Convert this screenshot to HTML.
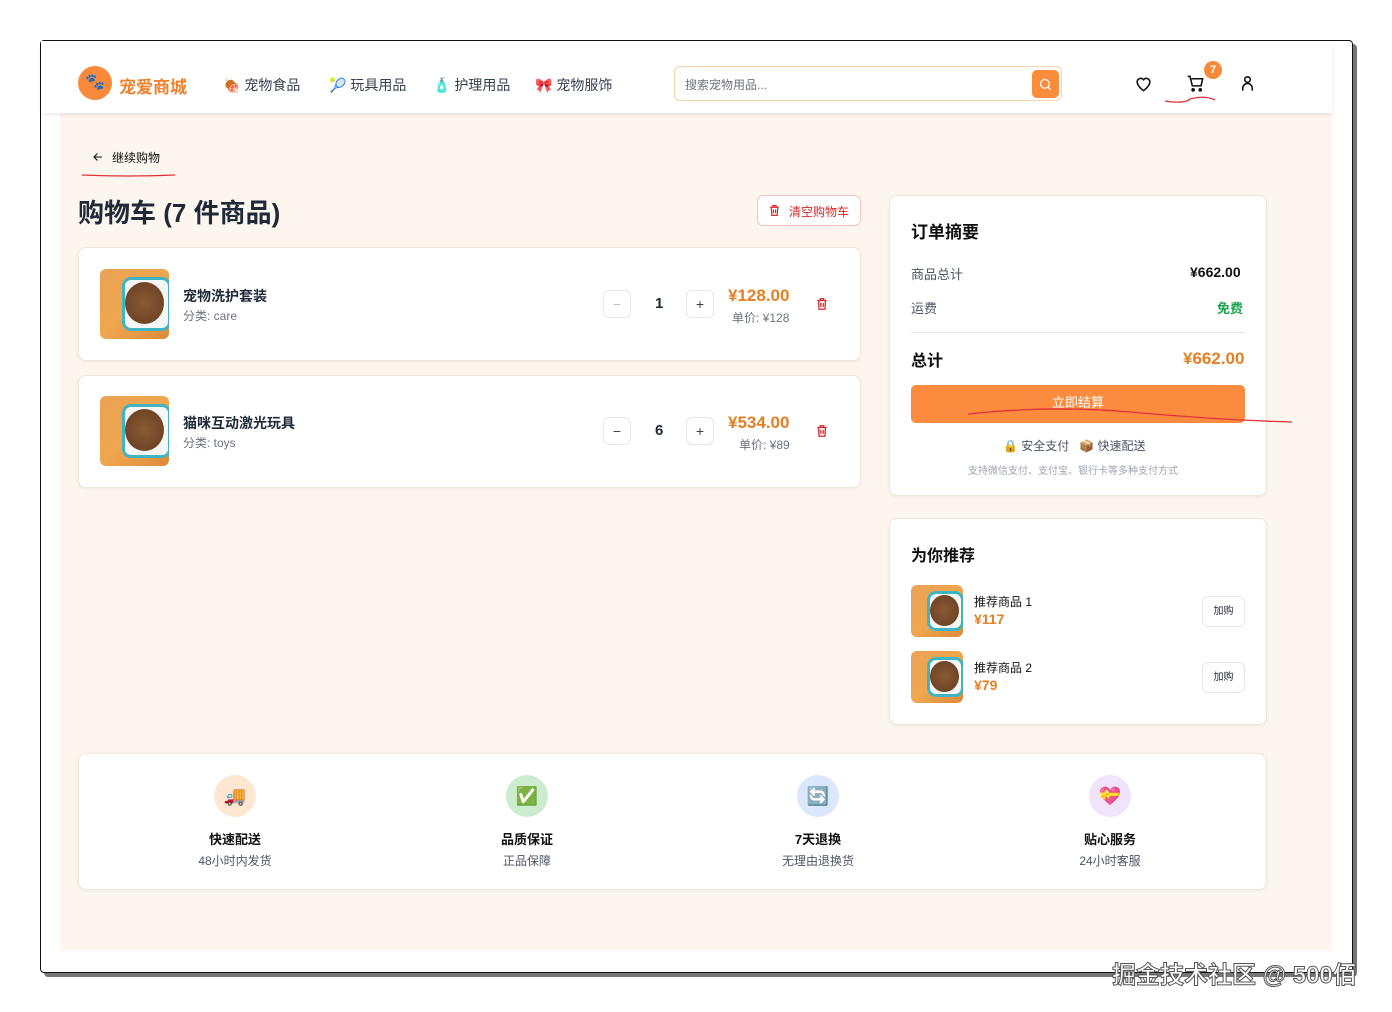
<!DOCTYPE html>
<html><head><meta charset="utf-8"><style>
*{margin:0;padding:0;box-sizing:border-box}
body{width:1392px;height:1012px;background:#fff;position:relative;overflow:hidden;font-family:"Liberation Sans","Noto Sans CJK SC",sans-serif;color:#1f2937}
.abs{position:absolute}
.frame{left:40px;top:40px;width:1313px;height:933px;border:1.5px solid #111;border-radius:4px;box-shadow:4px 4px 0 #777;background:#fff}
.content{left:60px;top:113px;width:1272px;height:838px;background:#fdf6ee}
.header{left:41px;top:41px;width:1291px;height:72px;background:#fff;box-shadow:0 2px 4px rgba(0,0,0,.08)}
.card{background:#fff;border:1px solid #f0e6da;border-radius:8px;box-shadow:0 1px 3px rgba(0,0,0,.06)}
.nav{font-size:14px;color:#374151;top:75px}
.food{border-radius:6px;overflow:hidden;background:linear-gradient(135deg,#e9a257,#f0a64e 50%,#dd8a3a);position:absolute}
.food .bowl{position:absolute;background:#f6f6f4;border:3px solid #3fb5c4;border-radius:9px}
.food .kib{position:absolute;border-radius:50%;background:radial-gradient(circle,#8a5a34,#6f4526 70%,#9a6a40)}
.qbtn{width:28px;height:28px;border:1px solid #e5e7eb;border-radius:6px;background:#fff;font-size:14px;text-align:center;line-height:26px;color:#374151}
.orange{color:#e67e22}
</style></head><body>
<div class="abs frame"></div>
<div class="abs content"></div>
<div class="abs header"></div>

<div class="abs" style="left:78px;top:66px;width:34px;height:34px;border-radius:50%;background:#f98a3c;font-size:16px;text-align:center;line-height:34px">🐾</div>
<div class="abs" style="left:119px;top:73px;font-size:17px;font-weight:bold;color:#f0812c">宠爱商城</div>
<div class="abs nav" style="left:223px">🍖 宠物食品</div>
<div class="abs nav" style="left:329px">🎾 玩具用品</div>
<div class="abs nav" style="left:433px">🧴 护理用品</div>
<div class="abs nav" style="left:535px">🎀 宠物服饰</div>

<div class="abs" style="left:674px;top:66px;width:388px;height:35px;border:1px solid #f3d2ac;border-radius:6px;background:#fff"></div>
<div class="abs" style="left:685px;top:76px;font-size:12px;color:#6b7280">搜索宠物用品...</div>
<div class="abs" style="left:1032px;top:70px;width:27px;height:28px;border-radius:5px;background:#fb8c3a"></div>
<svg class="abs" style="left:1038px;top:77px" width="15" height="15" viewBox="0 0 24 24" fill="none" stroke="#fff" stroke-width="2"><circle cx="11" cy="11" r="7"/><path d="M16 16l4 4"/></svg>

<svg class="abs" style="left:1134px;top:74px" width="19" height="19" viewBox="0 0 24 24" fill="none" stroke="#111" stroke-width="2"><path d="M12 21s-8-5.5-8-11a4.5 4.5 0 0 1 8-2.8A4.5 4.5 0 0 1 20 10c0 5.5-8 11-8 11z"/></svg>
<svg class="abs" style="left:1186px;top:74px" width="19" height="19" viewBox="0 0 24 24" fill="none" stroke="#111" stroke-width="2"><path d="M2 3h3l3 12h11l2-9H7"/><circle cx="9" cy="20" r="1.3" fill="#111"/><circle cx="18" cy="20" r="1.3" fill="#111"/></svg>
<div class="abs" style="left:1204px;top:61px;width:18px;height:18px;border-radius:50%;background:#f98a3c;color:#fff;font-size:11px;font-weight:bold;text-align:center;line-height:18px">7</div>
<svg class="abs" style="left:1238px;top:74px" width="19" height="19" viewBox="0 0 24 24" fill="none" stroke="#111" stroke-width="2"><circle cx="12" cy="7" r="3.5"/><path d="M6 21v-3a6 6 0 0 1 12 0v3"/></svg>

<svg class="abs" style="left:92px;top:151px" width="12" height="12" viewBox="0 0 24 24" fill="none" stroke="#111" stroke-width="2.2"><path d="M20 12H5M11 5l-7 7 7 7"/></svg>
<div class="abs" style="left:112px;top:149px;font-size:12px;color:#111">继续购物</div>
<div class="abs" style="left:78px;top:193px;font-size:26px;font-weight:bold;color:#1f2937">购物车 (7 件商品)</div>
<div class="abs" style="left:757px;top:195px;width:104px;height:31px;border:1px solid #f3c1c1;border-radius:6px;background:#fff"></div>
<svg class="abs" style="left:768px;top:204px" width="13" height="13" viewBox="0 0 24 24" fill="none" stroke="#dc2626" stroke-width="2.2"><path d="M4 6h16M9 6V3h6v3M6 6l1 15h10l1-15"/><path d="M10 10v7M14 10v7"/></svg>
<div class="abs" style="left:789px;top:203px;font-size:12px;color:#dc2626">清空购物车</div>

<div class="abs card" style="left:78px;top:247px;width:783px;height:114px"></div>
<div class="abs card" style="left:78px;top:375px;width:783px;height:113px"></div>

<div class="food" style="left:100px;top:269px;width:69px;height:70px"><div class="bowl" style="left:22px;top:8px;width:49px;height:54px"></div><div class="kib" style="left:25px;top:13px;width:39px;height:42px"></div></div>
<div class="abs" style="left:183px;top:286px;font-size:14px;font-weight:bold;color:#1f2937">宠物洗护套装</div>
<div class="abs" style="left:183px;top:307px;font-size:12px;color:#6b7280">分类: care</div>
<div class="abs qbtn" style="left:603px;top:290px;color:#bbb">−</div>
<div class="abs" style="left:655px;top:295px;font-size:15px;font-weight:bold">1</div>
<div class="abs qbtn" style="left:686px;top:290px">+</div>
<div class="abs orange" style="left:728px;top:286px;font-size:17px;font-weight:bold">¥128.00</div>
<div class="abs" style="left:732px;top:309px;font-size:12px;color:#6b7280">单价: ¥128</div>
<svg class="abs" style="left:815px;top:297px" width="14" height="14" viewBox="0 0 24 24" fill="none" stroke="#dc2626" stroke-width="2.2"><path d="M4 6h16M9 6V3h6v3M6 6l1 15h10l1-15"/><path d="M10 10v7M14 10v7"/></svg>

<div class="food" style="left:100px;top:396px;width:69px;height:70px"><div class="bowl" style="left:22px;top:8px;width:49px;height:54px"></div><div class="kib" style="left:25px;top:13px;width:39px;height:42px"></div></div>
<div class="abs" style="left:183px;top:413px;font-size:14px;font-weight:bold;color:#1f2937">猫咪互动激光玩具</div>
<div class="abs" style="left:183px;top:434px;font-size:12px;color:#6b7280">分类: toys</div>
<div class="abs qbtn" style="left:603px;top:417px">−</div>
<div class="abs" style="left:655px;top:422px;font-size:15px;font-weight:bold">6</div>
<div class="abs qbtn" style="left:686px;top:417px">+</div>
<div class="abs orange" style="left:728px;top:413px;font-size:17px;font-weight:bold">¥534.00</div>
<div class="abs" style="left:739px;top:436px;font-size:12px;color:#6b7280">单价: ¥89</div>
<svg class="abs" style="left:815px;top:424px" width="14" height="14" viewBox="0 0 24 24" fill="none" stroke="#dc2626" stroke-width="2.2"><path d="M4 6h16M9 6V3h6v3M6 6l1 15h10l1-15"/><path d="M10 10v7M14 10v7"/></svg>

<div class="abs card" style="left:889px;top:195px;width:378px;height:301px"></div>
<div class="abs" style="left:911px;top:218px;font-size:17px;font-weight:bold;color:#111">订单摘要</div>
<div class="abs" style="left:911px;top:264px;font-size:13px;color:#4b5563">商品总计</div>
<div class="abs" style="left:1190px;top:264px;font-size:14px;font-weight:bold;color:#111">¥662.00</div>
<div class="abs" style="left:911px;top:298px;font-size:13px;color:#4b5563">运费</div>
<div class="abs" style="left:1217px;top:298px;font-size:13px;font-weight:bold;color:#16a34a">免费</div>
<div class="abs" style="left:911px;top:332px;width:334px;height:1px;background:#e5e7eb"></div>
<div class="abs" style="left:911px;top:347px;font-size:16px;font-weight:bold;color:#111">总计</div>
<div class="abs orange" style="left:1183px;top:349px;font-size:17px;font-weight:bold">¥662.00</div>
<div class="abs" style="left:911px;top:385px;width:334px;height:38px;border-radius:5px;background:#fb8c3f;color:#fff;font-size:13px;text-align:center;line-height:36px">立即结算</div>
<div class="abs" style="left:1003px;top:437px;font-size:12px;color:#4b5563">🔒 安全支付 &nbsp; 📦 快速配送</div>
<div class="abs" style="left:968px;top:462px;font-size:10px;color:#9ca3af">支持微信支付、支付宝、银行卡等多种支付方式</div>

<div class="abs card" style="left:889px;top:518px;width:378px;height:207px"></div>
<div class="abs" style="left:911px;top:542px;font-size:16px;font-weight:bold;color:#111">为你推荐</div>
<div class="food" style="left:911px;top:585px;width:52px;height:52px"><div class="bowl" style="left:16px;top:6px;width:37px;height:40px"></div><div class="kib" style="left:19px;top:10px;width:29px;height:31px"></div></div>
<div class="abs" style="left:974px;top:593px;font-size:12px;color:#111">推荐商品 1</div>
<div class="abs orange" style="left:974px;top:611px;font-size:14px;font-weight:bold">¥117</div>
<div class="abs" style="left:1202px;top:596px;width:43px;height:31px;border:1px solid #e5e7eb;border-radius:6px;font-size:10px;text-align:center;line-height:29px">加购</div>
<div class="food" style="left:911px;top:651px;width:52px;height:52px"><div class="bowl" style="left:16px;top:6px;width:37px;height:40px"></div><div class="kib" style="left:19px;top:10px;width:29px;height:31px"></div></div>
<div class="abs" style="left:974px;top:659px;font-size:12px;color:#111">推荐商品 2</div>
<div class="abs orange" style="left:974px;top:677px;font-size:14px;font-weight:bold">¥79</div>
<div class="abs" style="left:1202px;top:662px;width:43px;height:31px;border:1px solid #e5e7eb;border-radius:6px;font-size:10px;text-align:center;line-height:29px">加购</div>

<div class="abs card" style="left:78px;top:753px;width:1189px;height:137px"></div>
<div class="abs" style="left:214px;top:775px;width:42px;height:42px;border-radius:50%;background:#fde7d3;text-align:center;line-height:42px;font-size:18px">🚚</div>
<div class="abs" style="left:160px;top:829px;width:150px;text-align:center;font-size:13px;font-weight:bold;color:#111">快速配送</div>
<div class="abs" style="left:160px;top:852px;width:150px;text-align:center;font-size:12px;color:#4b5563">48小时内发货</div>
<div class="abs" style="left:506px;top:775px;width:42px;height:42px;border-radius:50%;background:#cdeccf;text-align:center;line-height:42px;font-size:18px">✅</div>
<div class="abs" style="left:452px;top:829px;width:150px;text-align:center;font-size:13px;font-weight:bold;color:#111">品质保证</div>
<div class="abs" style="left:452px;top:852px;width:150px;text-align:center;font-size:12px;color:#4b5563">正品保障</div>
<div class="abs" style="left:797px;top:775px;width:42px;height:42px;border-radius:50%;background:#dbe8fb;text-align:center;line-height:42px;font-size:18px">🔄</div>
<div class="abs" style="left:743px;top:829px;width:150px;text-align:center;font-size:13px;font-weight:bold;color:#111">7天退换</div>
<div class="abs" style="left:743px;top:852px;width:150px;text-align:center;font-size:12px;color:#4b5563">无理由退换货</div>
<div class="abs" style="left:1089px;top:775px;width:42px;height:42px;border-radius:50%;background:#efe4fb;text-align:center;line-height:42px;font-size:18px">💝</div>
<div class="abs" style="left:1035px;top:829px;width:150px;text-align:center;font-size:13px;font-weight:bold;color:#111">贴心服务</div>
<div class="abs" style="left:1035px;top:852px;width:150px;text-align:center;font-size:12px;color:#4b5563">24小时客服</div>

<svg class="abs" style="left:0;top:0" width="1392" height="1012" fill="none" stroke="#e0303a" stroke-width="1.3">
<path d="M82 175 Q130 177 175 175"/>
<path d="M1165 101 Q1185 104 1190 99 Q1205 95 1215 100"/>
<path d="M968 414 Q1050 405 1130 412 Q1220 420 1292 422"/>
</svg>
<div class="abs" style="left:1112px;top:955px;font-size:24px;color:#fff;-webkit-text-stroke:1px #555;font-weight:bold;white-space:nowrap">掘金技术社区 @ 500佰</div>
</body></html>
